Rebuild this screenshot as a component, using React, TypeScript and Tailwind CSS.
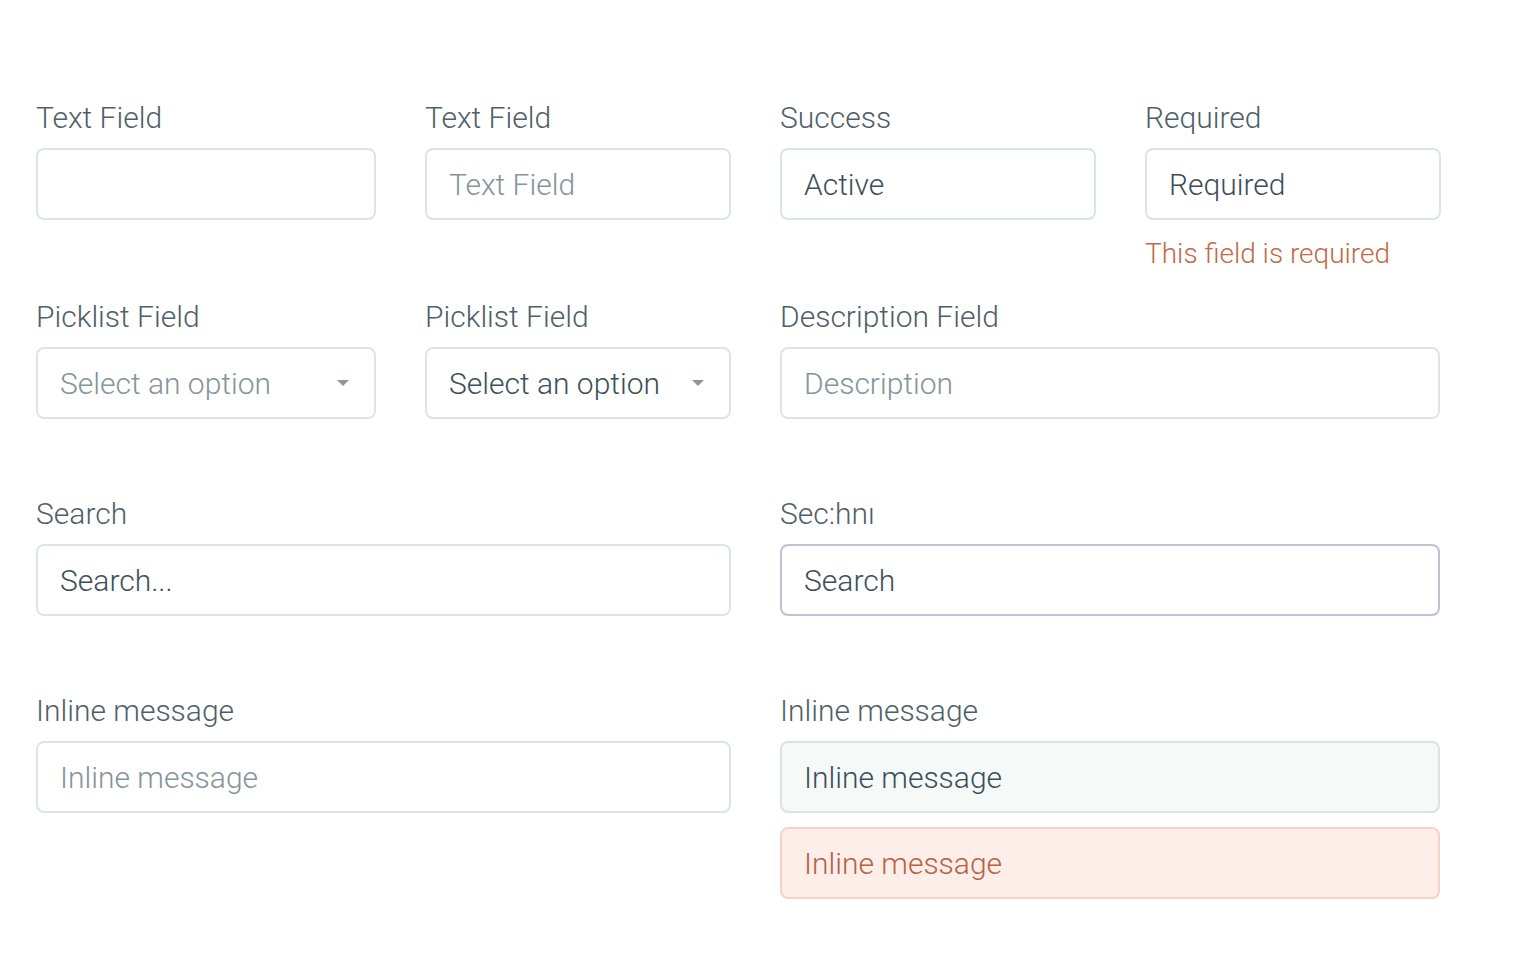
import React from 'react';

type Tone = 'default' | 'success' | 'focus' | 'info' | 'error';

const boxTone: Record<Tone, string> = {
  default: 'border-[#dfe3e6] bg-white',
  success: 'border-[#d3e6e8] bg-white',
  focus: 'border-[#c4bdd8] bg-white',
  info: 'border-[#d7e4e2] bg-[#f5faf9]',
  error: 'border-[#f6d2c9] bg-[#fdeeea]',
};

const Label: React.FC<{ children: React.ReactNode }> = ({ children }) => (
  <div className="h-9 leading-9 text-[30px] font-light text-[#4f5f67] mb-3 whitespace-nowrap">{children}</div>
);

interface FieldProps {
  value: string;
  placeholder?: boolean;
  tone?: Tone;
  select?: boolean;
  textClass?: string;
}

const Field: React.FC<FieldProps> = ({ value, placeholder = false, tone = 'default', select = false, textClass }) => {
  const color = textClass ?? (placeholder ? 'text-[#84949b]' : 'text-[#3c4f58]');
  return (
    <div className={`h-[72px] rounded-lg border-2 flex items-center justify-between pl-[22px] pr-[24px] ${boxTone[tone]}`}>
      <span className={`text-[30px] font-light whitespace-nowrap ${color}`}>{value}</span>
      {select && (
        <svg width="14" height="8" viewBox="0 0 14 8" className="shrink-0">
          <path d="M1 1h12L7 7z" fill="#8c979d" />
        </svg>
      )}
    </div>
  );
};

export default function App() {
  return (
    <div className="min-h-screen bg-white pl-9 pt-[100px]" style={{ fontFamily: 'Roboto, "Noto Sans", sans-serif' }}>
      <div className="w-[1405px]">
        {/* row 1: text inputs */}
        <div className="grid grid-cols-[340px_306px_316px_296px] gap-x-[49px] items-start">
          <div>
            <Label>Text Field</Label>
            <Field value="" />
          </div>
          <div>
            <Label>Text Field</Label>
            <Field value="Text Field" placeholder />
          </div>
          <div>
            <Label>Success</Label>
            <Field value="Active" tone="success" />
          </div>
          <div>
            <Label>Required</Label>
            <Field value="Required" />
            <div className="mt-4 h-9 leading-9 text-[28px] font-light text-[#c26a45] whitespace-nowrap">This field is required</div>
          </div>
        </div>

        {/* row 2: picklists + description */}
        <div className="grid grid-cols-[340px_306px_660px] gap-x-[49px] mt-[27px]">
          <div>
            <Label>Picklist Field</Label>
            <Field value="Select an option" placeholder select />
          </div>
          <div>
            <Label>Picklist Field</Label>
            <Field value="Select an option" select />
          </div>
          <div>
            <Label>Description Field</Label>
            <Field value="Description" placeholder />
          </div>
        </div>

        {/* row 3: search */}
        <div className="grid grid-cols-[695px_660px] gap-x-[49px] mt-[77px]">
          <div>
            <Label>Search</Label>
            <Field value="Search..." />
          </div>
          <div>
            <Label>Sec:hnı</Label>
            <Field value="Search" tone="focus" />
          </div>
        </div>

        {/* row 4: inline messages */}
        <div className="grid grid-cols-[695px_660px] gap-x-[49px] mt-[77px]">
          <div>
            <Label>Inline message</Label>
            <Field value="Inline message" placeholder />
          </div>
          <div className="flex flex-col gap-[14px]">
            <div>
              <Label>Inline message</Label>
              <Field value="Inline message" tone="info" />
            </div>
            <Field value="Inline message" tone="error" textClass="text-[#b8623f]" />
          </div>
        </div>
      </div>
    </div>
  );
}
